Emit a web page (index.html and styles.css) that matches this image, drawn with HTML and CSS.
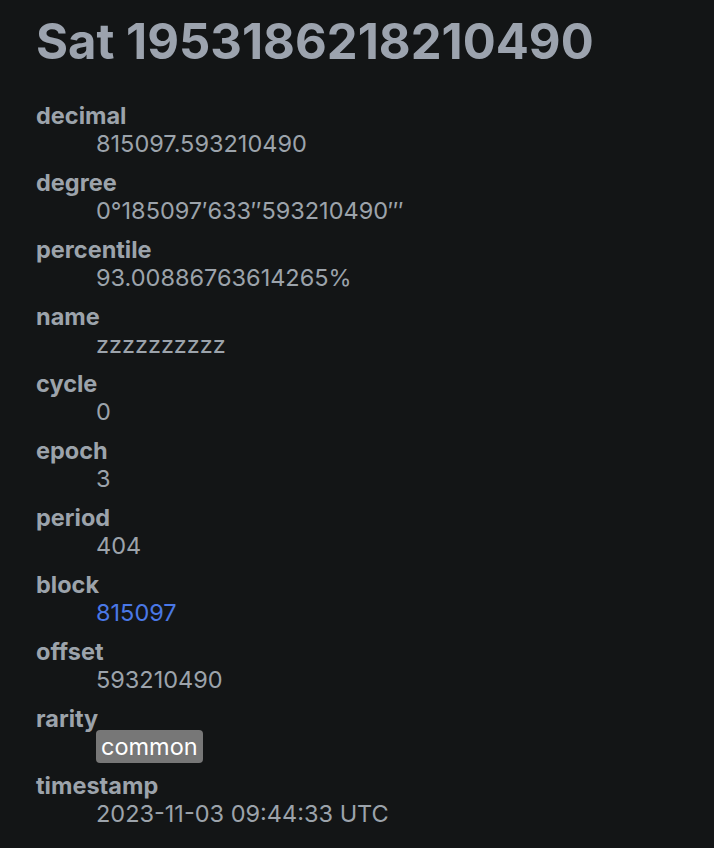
FILE: index.html
```html
<!DOCTYPE html>
<html>
<head>
<meta charset="utf-8">
<link rel="stylesheet" href="styles.css">
</head>
<body>
<main class="page">
  <h1 class="title">Sat 1953186218210490</h1>
  <dl class="details">
    <dt>decimal</dt><dd>815097.593210490</dd>
    <dt>degree</dt><dd>0°185097′633″593210490‴</dd>
    <dt>percentile</dt><dd>93.00886763614265%</dd>
    <dt>name</dt><dd>zzzzzzzzzz</dd>
    <dt>cycle</dt><dd>0</dd>
    <dt>epoch</dt><dd>3</dd>
    <dt>period</dt><dd>404</dd>
    <dt>block</dt><dd><a class="link" href="#">815097</a></dd>
    <dt>offset</dt><dd>593210490</dd>
    <dt>rarity</dt><dd><span class="badge">common</span></dd>
    <dt>timestamp</dt><dd>2023-11-03 09:44:33 UTC</dd>
  </dl>
</main>
</body>
</html>
```

FILE: styles.css
```css
html, body {
  margin: 0;
  padding: 0;
  background: #131516;
}
body {
  font-family: Inter, "Liberation Sans", sans-serif;
  color: #9ca3ab;
}
.page {
  padding: 13px 36px 0 36px;
}
.title {
  margin: 0 0 31px 0;
  font-size: 49px;
  line-height: 58px;
  font-weight: 700;
  color: #9ca3ae;
}
.details {
  margin: 0;
  font-size: 23.5px;
  line-height: 28px;
}
.details dt {
  font-weight: 700;
}
.details dd {
  margin: 0 0 11px 60px;
}
.link {
  color: #4a78e6;
  text-decoration: none;
}
.badge {
  background: #777777;
  color: #ffffff;
  border-radius: 4px;
  padding: 2px 5px;
}
```
